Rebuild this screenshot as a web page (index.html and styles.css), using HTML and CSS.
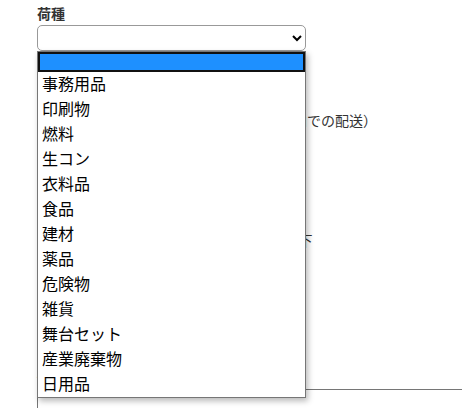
FILE: index.html
```html
<!DOCTYPE html>
<html lang="ja">
<head>
<meta charset="utf-8">
<title>荷種</title>
<link rel="stylesheet" href="styles.css">
</head>
<body>
<div class="page">
  <form class="form">
    <div class="field">
      <label class="label" for="kind">荷種</label>
      <select id="kind" class="select"><option></option></select>
    </div>
    <div class="field field-area">
      <div class="label">配送範囲</div>
      <div class="row">通常便（首都圏エリア内一都三県の範囲内での配送）</div>
    </div>
    <div class="field field-weight">
      <div class="label">重量</div>
      <div class="row row-weight">重量は一個あたり原則として二十キロ以下</div>
    </div>
    <div class="field field-note">
      <div class="label">備考</div>
      <div class="textbox"></div>
    </div>
  </form>

  <div class="menu">
    <div class="opt opt-blank"></div>
    <div class="opt">事務用品</div>
    <div class="opt">印刷物</div>
    <div class="opt">燃料</div>
    <div class="opt">生コン</div>
    <div class="opt">衣料品</div>
    <div class="opt">食品</div>
    <div class="opt">建材</div>
    <div class="opt">薬品</div>
    <div class="opt">危険物</div>
    <div class="opt">雑貨</div>
    <div class="opt">舞台セット</div>
    <div class="opt">産業廃棄物</div>
    <div class="opt">日用品</div>
  </div>
</div>
</body>
</html>
```

FILE: styles.css
```css
html, body {
  margin: 0;
  padding: 0;
  background: #fff;
}
body {
  font-family: "Noto Sans CJK JP", "Noto Sans", sans-serif;
  color: #333;
  width: 462px;
  height: 408px;
  overflow: hidden;
}
.page {
  position: relative;
  padding: 3px 0 0 37px;
}
.form {
  display: flex;
  flex-direction: column;
}
.field {
  display: flex;
  flex-direction: column;
}
.label {
  font-size: 14px;
  font-weight: bold;
  line-height: 20px;
  height: 20px;
  margin-bottom: 2px;
  color: #333;
}
.select {
  width: 269px;
  height: 26px;
  margin: 0;
  border: 1px solid #999;
  border-radius: 5px;
  background: #fff;
  font-size: 14px;
  box-sizing: border-box;
}
.field-area {
  margin-top: 37px;
}
.row {
  font-size: 14px;
  line-height: 20px;
  height: 20px;
  padding-left: 4px;
  white-space: nowrap;
  color: #333;
}
.field-weight {
  margin-top: 78px;
}
.row-weight {
  padding-left: 10px;
}
.field-note {
  margin-top: 117px;
}
.textbox {
  width: 500px;
  height: 80px;
  border-top: 1px solid #767676;
  border-left: 1px solid #767676;
}
.menu {
  position: absolute;
  left: 37px;
  top: 51px;
  width: 269px;
  box-sizing: border-box;
  border: 1px solid #767676;
  background: #fff;
  box-shadow: 2px 3px 6px rgba(0, 0, 0, 0.28);
  display: flex;
  flex-direction: column;
}
.opt {
  height: 25px;
  box-sizing: border-box;
  line-height: 22px;
  padding: 0 0 3px 4px;
  font-size: 16px;
  color: #000;
  white-space: nowrap;
}
.opt-blank {
  height: 20px;
  padding: 0;
  background: #1e90ff;
  border: 2px solid #111;
}
```
